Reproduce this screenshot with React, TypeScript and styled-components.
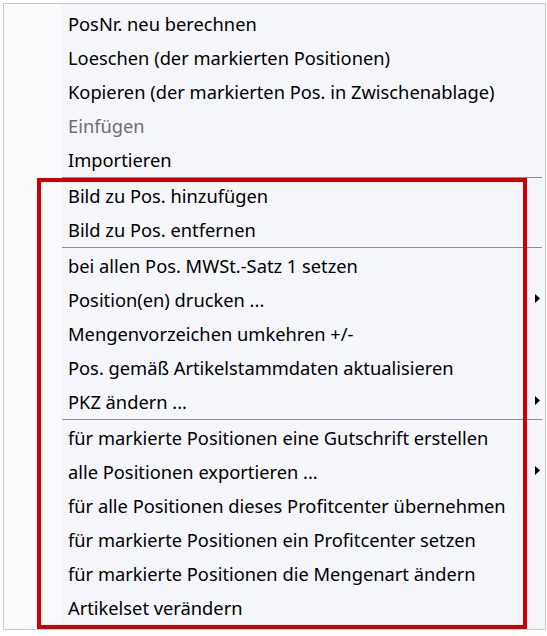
import React from "react";
import styled, { createGlobalStyle } from "styled-components";

const Global = createGlobalStyle`
  html, body { margin: 0; padding: 0; background: #ffffff; }
  body { font-family: "Noto Sans", "Open Sans", sans-serif; }
`;

const Stage = styled.div`
  position: relative;
  width: 547px;
  height: 636px;
  overflow: hidden;
  padding: 3px 0 0 3px;
  box-sizing: border-box;
`;

const Menu = styled.div`
  width: 543px;
  box-sizing: border-box;
  border: 1px solid #c9c9cf;
  padding: 3px 0 4px 0;
  background: linear-gradient(to right, #fbfbfe 0, #fbfbfe 57px, #f5f6fa 57px);
`;

const Item = styled.div<{ $disabled?: boolean }>`
  height: 34px;
  display: flex;
  align-items: center;
  justify-content: space-between;
  padding: 0 5px 0 64px;
  font-size: 18.3px;
  color: ${(p) => (p.$disabled ? "#6d6d6d" : "#000000")};
  white-space: nowrap;
`;

const Label = styled.span`
  line-height: 1;
`;

const Arrow = styled.svg`
  display: block;
  width: 5px;
  height: 9px;
  margin-top: -3px;
`;

const Separator = styled.div`
  height: 1px;
  margin: 0 3px 1px 58px;
  background: #8a8aa6;
`;

const Highlight = styled.div`
  position: absolute;
  left: 37px;
  top: 178px;
  width: 490px;
  height: 451px;
  box-sizing: border-box;
  border: 4px solid #cc0000;
  pointer-events: none;
`;

type Entry = { label: string; disabled?: boolean; sub?: boolean } | "sep";

const entries: Entry[] = [
  { label: "PosNr. neu berechnen" },
  { label: "Loeschen (der markierten Positionen)" },
  { label: "Kopieren (der markierten Pos. in Zwischenablage)" },
  { label: "Einfügen", disabled: true },
  { label: "Importieren" },
  "sep",
  { label: "Bild zu Pos. hinzufügen" },
  { label: "Bild zu Pos. entfernen" },
  "sep",
  { label: "bei allen Pos. MWSt.-Satz 1 setzen" },
  { label: "Position(en) drucken ...", sub: true },
  { label: "Mengenvorzeichen umkehren +/-" },
  { label: "Pos. gemäß Artikelstammdaten aktualisieren" },
  { label: "PKZ ändern ...", sub: true },
  "sep",
  { label: "für markierte Positionen eine Gutschrift erstellen" },
  { label: "alle Positionen exportieren ...", sub: true },
  { label: "für alle Positionen dieses Profitcenter übernehmen" },
  { label: "für markierte Positionen ein Profitcenter setzen" },
  { label: "für markierte Positionen die Mengenart ändern" },
  { label: "Artikelset verändern" },
];

export default function App() {
  return (
    <Stage>
      <Global />
      <Menu>
        {entries.map((e, i) =>
          e === "sep" ? (
            <Separator key={i} />
          ) : (
            <Item key={i} $disabled={e.disabled}>
              <Label>{e.label}</Label>
              {e.sub && (
                <Arrow viewBox="0 0 5 9">
                  <path d="M0 0 L5 4.5 L0 9 Z" fill="#000" />
                </Arrow>
              )}
            </Item>
          )
        )}
      </Menu>
      <Highlight />
    </Stage>
  );
}
